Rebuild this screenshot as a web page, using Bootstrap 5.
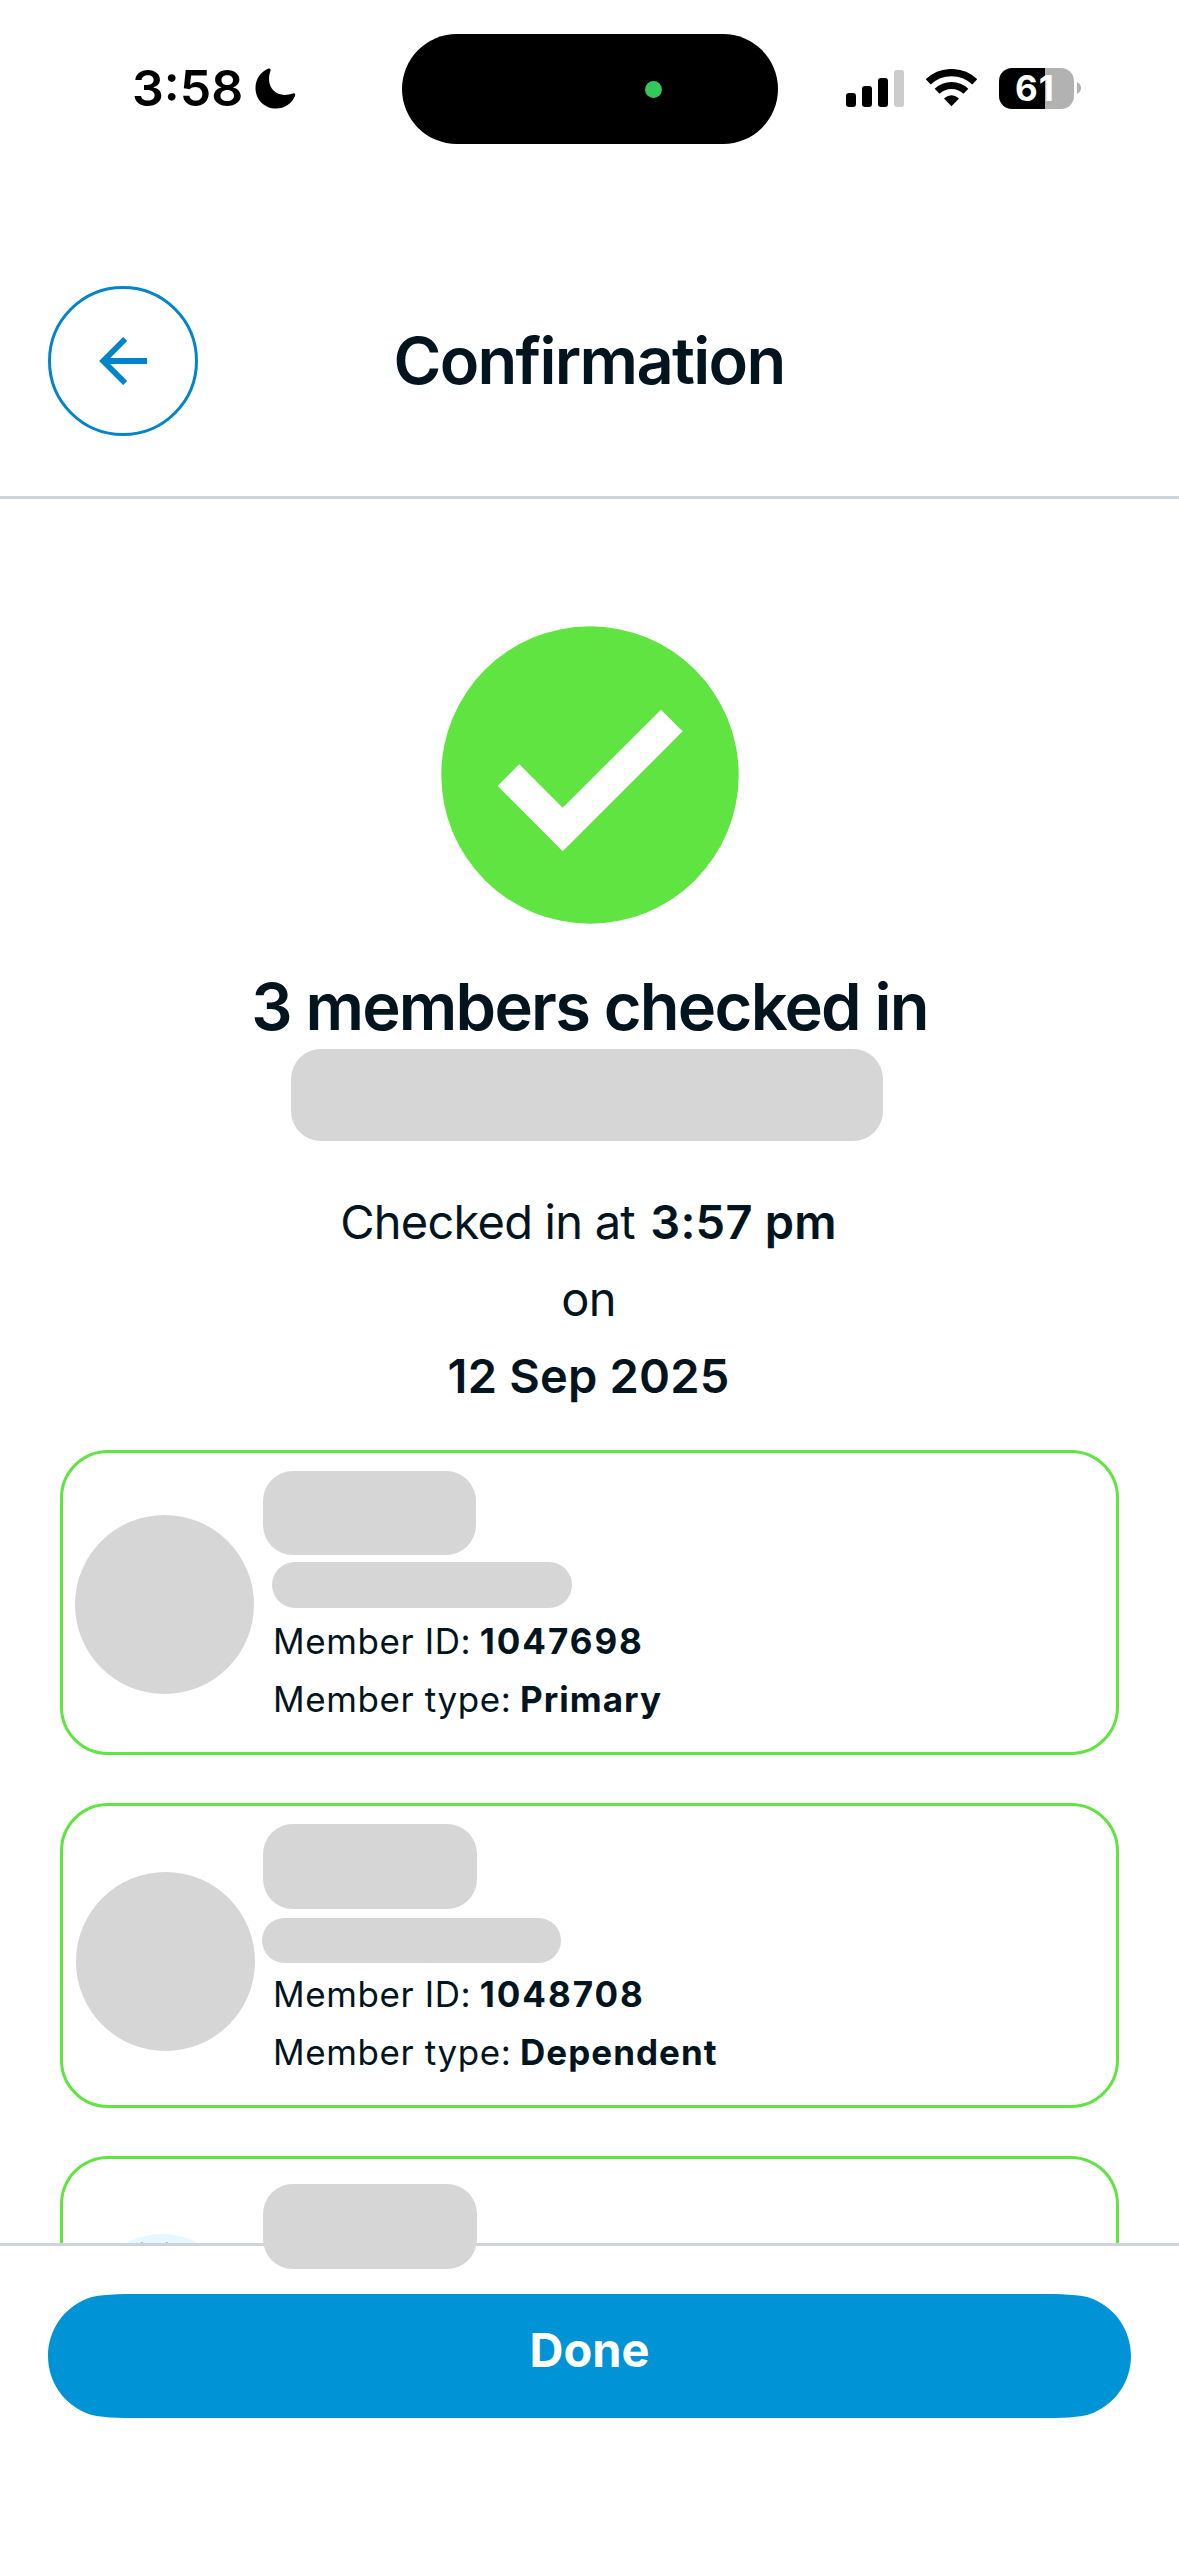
<!DOCTYPE html>
<html lang="en">
<head>
<meta charset="utf-8">
<meta name="viewport" content="width=device-width, initial-scale=1">
<title>Confirmation</title>
<link href="https://cdn.jsdelivr.net/npm/bootstrap@5.3.0/dist/css/bootstrap.min.css" rel="stylesheet">
<style>
  :root { --ink: #02141d; --ok: #60e441; --brand: #0093d6; --rule: #ced4db; --mask: #d6d6d6; }
  body { font-family: Inter, "Liberation Sans", sans-serif; color: var(--ink); background: #fff; }
  .screen { width: 1179px; height: 2556px; }
  .fw-semi { font-weight: 600; }

  .status { height: 226px; padding-top: 33.5px; color: #000; }
  .status-side { height: 109px; }
  .status-left { width: 402px; padding-left: 132px; gap: 12px; }
  .clock { font-size: 50px; line-height: 60px; font-weight: 600; }
  .island { width: 376px; height: 110.5px; border-radius: 56px; background: #000; padding-right: 116px; }
  .live-dot { width: 17px; height: 17px; margin-top: 1px; background: #34c759; }
  .status-right { padding-left: 68px; }
  .status-right svg, .status-left svg { display: block; }
  .wifi { margin-left: 22px; }
  .battery { width: 75px; height: 41px; border-radius: 13px; margin: 0 3px 0 22px;
    background: linear-gradient(to right, #000 46px, #b2b2b2 46px);
    font-size: 35px; line-height: 41px; font-weight: 700; color: #fff; letter-spacing: 1px; padding-right: 3px; }

  .topbar { height: 273px; border-bottom: 3px solid var(--rule); padding: 0 48px; }
  .back { width: 150px; height: 150px; border: 3px solid #0284cb; color: #0284cb; }
  .topbar-title { font-size: 65px; line-height: 78px; letter-spacing: -1.7px; padding-right: 1px; }

  .content { height: 1744px; padding: 126px 60px 0; }
  .headline { font-size: 65px; line-height: 78px; letter-spacing: -1.76px; margin-top: 43px; }
  .mask { background: var(--mask); border-radius: 30px; }
  .mask-place { width: 592px; height: 92px; margin: 3px 5px 0 0; }
  .when { font-size: 47px; line-height: 77px; letter-spacing: -.77px; margin: 42px 2px 0 0; }
  .when strong { font-weight: 600; letter-spacing: .2px; }
  .when .time { margin-left: 3px; }

  .members { gap: 48px; margin-top: 36px; }
  .member { height: 305px; border: 3px solid var(--ok); border-radius: 48px; padding-left: 12px; }
  .avatar-mask { width: 179px; height: 179px; margin-top: 62px; background: var(--mask); }
  .info { padding-left: 9px; padding-top: 18px; }
  .mask-name { width: 213px; height: 84px; }
  .mask-sub { width: 300px; height: 46px; border-radius: 23px; margin: 7px 0 4px 9px; }
  .line { font-size: 35px; line-height: 58px; letter-spacing: .6px; padding-left: 10px; }
  .line strong { font-weight: 700; letter-spacing: 1.05px; margin-left: -2px; }
  .line .num { letter-spacing: 1.95px; }
  .member-2 .avatar-mask { margin: 66px 0 0 1px; }
  .member-2 .info { padding-left: 8px; }
  .member-2 .mask-name { width: 214px; height: 85px; }
  .member-2 .mask-sub { width: 299px; height: 45px; margin: 9px 0 2px -1px; }
  .member-2 .line { padding-left: 10px; }
  .member-cut { height: 87px; border-bottom: 0; border-radius: 48px 48px 0 0; }
  .avatar { width: 150px; height: 9px; margin: 75px 26px 0 12px; }
  .member-cut .mask-name { position: relative; z-index: 2; width: 214px; height: 85px; margin-top: 7px; }
  .member-cut .info { padding-left: 0; }

  .footer { position: relative; z-index: 1; height: 313px; border-top: 3px solid var(--rule); padding: 48px 48px 0; background: #fff; }
  .btn-done { width: 1083px; height: 124px; border: 0; border-radius: 0; padding: 0 0 12px; background: var(--brand); color: #fff;
    font-size: 47px; line-height: 60px; font-weight: 700;
    clip-path: path("M0 62C0 37 15 14.5 38 5C50 0 72 0 92 0H991C1011 0 1033 0 1045 5C1068 14.5 1083 37 1083 62C1083 87 1068 109.5 1045 119C1033 124 1011 124 991 124H92C72 124 50 124 38 119C15 109.5 0 87 0 62Z"); }
  .btn-done:hover { background: #0284cb; color: #fff; }
</style>
</head>
<body>
<div class="screen overflow-hidden d-flex flex-column">

  <div class="status d-flex align-items-start flex-shrink-0">
    <div class="status-side status-left d-flex align-items-center">
      <span class="clock">3:58</span>
      <svg width="41" height="41" viewBox="0 0 41 41" fill="currentColor" aria-hidden="true"><path d="M13.4.6C15 0 16 1 15.500 2.700C14.300 6 13.900 9 14.100 12.500C14.700 21 21 26.800 29.500 26.900C32.500 26.900 35.500 26.400 38 25.500C39.700 25 40.700 26 40.100 27.700C37 35.500 29.600 40.500 21 40.500C9.600 40.500.5 31.500.5 20.200C.5 11.200 5.500 3.800 13.400.6Z"/></svg>
    </div>
    <div class="island d-flex align-items-center justify-content-end"><span class="live-dot rounded-circle"></span></div>
    <div class="status-side status-right d-flex align-items-center">
      <svg width="58" height="37" viewBox="0 0 58 37" aria-hidden="true"><g fill="#000"><rect y="23" width="10" height="14" rx="3"/><rect x="16" y="16" width="10" height="21" rx="3"/><rect x="32" y="8" width="10" height="29" rx="3"/></g><rect x="48" width="10" height="37" rx="3" fill="#ccc"/></svg>
      <svg class="wifi" width="51" height="38" viewBox="0 0 51 38" aria-hidden="true"><g transform="translate(25.500 37.200)" fill="none" stroke="#000"><path d="M-23.300-24.300A33.700 33.700 0 0 1 23.300-24.300" stroke-width="7.200"/><path d="M-14.400-15A20.800 20.800 0 0 1 14.400-15" stroke-width="7"/><path d="M0 0L-7.500-7.600Q0-14.500 7.500-7.600Z" fill="#000" stroke="none"/></g></svg>
      <div class="battery text-center">61</div>
      <svg width="4" height="12" viewBox="0 0 4 12" aria-hidden="true"><path d="M0 0Q4 2.200 4 6T0 12Z" fill="#b2b2b2"/></svg>
    </div>
  </div>

  <header class="topbar d-flex align-items-center justify-content-between flex-shrink-0">
    <button class="back btn rounded-circle p-0 d-flex align-items-center justify-content-center" type="button" aria-label="Back">
      <svg width="48" height="48" viewBox="0 0 48 48" fill="none" stroke="currentColor" stroke-width="5.800" aria-hidden="true"><path d="M48 24H5M26.200 2L4.200 24L26.200 46"/></svg>
    </button>
    <h1 class="topbar-title fw-semi m-0">Confirmation</h1>
    <span class="back invisible"></span>
  </header>

  <main class="content flex-shrink-0 d-flex flex-column">
    <section class="d-flex flex-column align-items-center text-center">
      <svg width="300" height="300" viewBox="0 0 300 300" class="d-block" role="img" aria-label="Success"><circle cx="150" cy="150" r="148.700" fill="#60e441"/><path d="M57.700 161L79.300 139.200L122.700 182.700L221 84.700L242.700 106.300L122.700 226.300Z" fill="#fff"/></svg>
      <h2 class="headline fw-semi mb-0">3 members checked in</h2>
      <div class="mask mask-place"></div>
      <div class="when">
        <div>Checked in at <strong class="time">3:57 pm</strong></div>
        <div>on</div>
        <div><strong>12 Sep 2025</strong></div>
      </div>
    </section>

    <section class="members d-flex flex-column">
      <article class="member d-flex align-items-start">
        <div class="avatar-mask rounded-circle"></div>
        <div class="info">
          <div class="mask mask-name"></div>
          <div class="mask mask-sub"></div>
          <div class="line">Member ID: <strong class="num">1047698</strong></div>
          <div class="line">Member type: <strong>Primary</strong></div>
        </div>
      </article>
      <article class="member member-2 d-flex align-items-start">
        <div class="avatar-mask rounded-circle"></div>
        <div class="info">
          <div class="mask mask-name"></div>
          <div class="mask mask-sub"></div>
          <div class="line">Member ID: <strong class="num">1048708</strong></div>
          <div class="line">Member type: <strong>Dependent</strong></div>
        </div>
      </article>
      <article class="member member-cut d-flex align-items-start">
        <svg class="avatar" viewBox="0 0 150 9" aria-hidden="true"><circle cx="75" cy="75" r="75" fill="#e5f8ff"/><path d="M54 8.500h1.500M79 8.500h1.500" stroke="#9fb4bd" stroke-width="1"/></svg>
        <div class="info"><div class="mask mask-name"></div></div>
      </article>
    </section>
  </main>

  <footer class="footer flex-shrink-0">
    <button class="btn btn-done" type="button">Done</button>
  </footer>
</div>
<script src="https://cdn.jsdelivr.net/npm/bootstrap@5.3.0/dist/js/bootstrap.bundle.min.js"></script>
</body>
</html>
